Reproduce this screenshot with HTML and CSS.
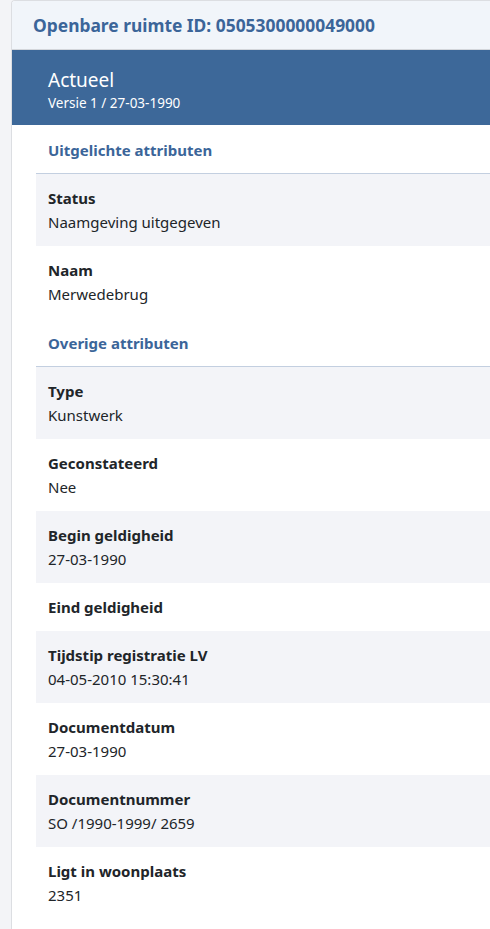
FILE: index.html
```html
<!DOCTYPE html>
<html lang="nl">
<head>
<meta charset="utf-8">
<link rel="stylesheet" href="styles.css">
</head>
<body>
<div class="card">
  <div class="card-header">Openbare ruimte ID: 0505300000049000</div>
  <div class="band">
    <div class="band-title">Actueel</div>
    <div class="band-sub">Versie 1 / 27-03-1990</div>
  </div>
  <div class="content">
    <div class="section">Uitgelichte attributen</div>
    <div class="row alt"><div class="label">Status</div><div class="value">Naamgeving uitgegeven</div></div>
    <div class="row"><div class="label">Naam</div><div class="value">Merwedebrug</div></div>
    <div class="section">Overige attributen</div>
    <div class="row alt"><div class="label">Type</div><div class="value">Kunstwerk</div></div>
    <div class="row"><div class="label">Geconstateerd</div><div class="value">Nee</div></div>
    <div class="row alt"><div class="label">Begin geldigheid</div><div class="value">27-03-1990</div></div>
    <div class="row"><div class="label">Eind geldigheid</div></div>
    <div class="row alt"><div class="label">Tijdstip registratie LV</div><div class="value">04-05-2010 15:30:41</div></div>
    <div class="row"><div class="label">Documentdatum</div><div class="value">27-03-1990</div></div>
    <div class="row alt"><div class="label">Documentnummer</div><div class="value">SO /1990-1999/ 2659</div></div>
    <div class="row"><div class="label">Ligt in woonplaats</div><div class="value">2351</div></div>
  </div>
</div>
</body>
</html>
```
FILE: styles.css
```css
html, body {
  margin: 0;
  padding: 0;
  background: #f3f4f7;
  overflow: hidden;
  height: 929px;
}
body {
  padding-left: 11px;
  font-family: "Noto Sans", "Open Sans", sans-serif;
  color: #212529;
}
.card {
  height: 960px;
  background: #fff;
  border: 1px solid #dcdee2;
  border-right: none;
  border-radius: 4px 0 0 4px;
  overflow: hidden;
}
.card-header {
  height: 49px;
  box-sizing: border-box;
  background: #f1f5fa;
  border-bottom: 1px solid #d3d6db;
  padding: 0 21px;
  display: flex;
  align-items: center;
  color: #3b6599;
  font-weight: 700;
  font-size: 17.4px;
}
.band {
  background: #3d6899;
  color: #fff;
  height: 75px;
  box-sizing: border-box;
  padding: 17px 36px 0;
}
.band-title {
  font-size: 19px;
  line-height: 26px;
}
.band-sub {
  font-size: 13.5px;
  line-height: 20px;
}
.content {
  padding-left: 24px;
}
.section {
  height: 49px;
  box-sizing: border-box;
  border-bottom: 1px solid #c3cfe0;
  display: flex;
  align-items: center;
  padding: 2px 0 0 12px;
  color: #3b6599;
  font-weight: 700;
  font-size: 15px;
}
.row {
  padding: 12px;
  font-size: 15px;
  line-height: 24px;
}
.row.alt {
  background: #f3f4f8;
}
.label {
  font-weight: 700;
}
```
